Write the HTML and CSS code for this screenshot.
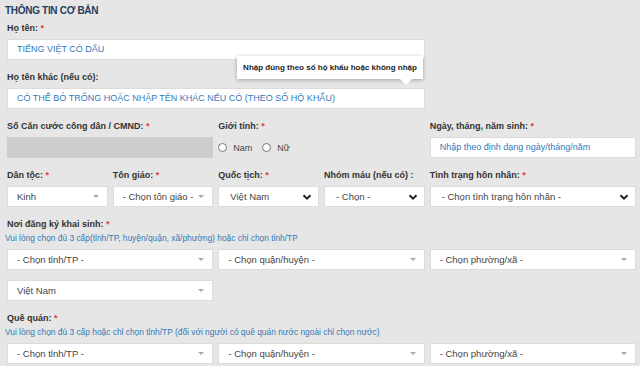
FILE: index.html
```html
<!DOCTYPE html>
<html lang="vi">
<head>
  <meta charset="UTF-8" />
  <meta name="viewport" content="width=device-width, initial-scale=1.0"/>
  <title>Thông tin cơ bản</title>
  <link rel="stylesheet" href="styles.css">
</head>
<body>

  <div class="form">
    <h2 class="title">THÔNG TIN CƠ BẢN</h2>

    <div class="row">
      <div class="field col-8">
        <label>Họ tên: <span class="req">*</span></label>
        <div class="input">TIẾNG VIỆT CÓ DẤU</div>
      </div>
    </div>

    <div class="row">
      <div class="field col-8 has-tip">
        <label>Họ tên khác (nếu có):</label>
        <div class="input">CÓ THỂ BỎ TRỐNG HOẶC NHẬP TÊN KHÁC NẾU CÓ (THEO SỐ HỘ KHẨU)</div>
        <!-- tooltip over the input -->
        <div class="tip">Nhập đúng theo sổ hộ khẩu hoặc không nhập</div>
      </div>
    </div>

    <div class="row">
      <div class="field col-4">
        <label>Số Căn cước công dân / CMND: <span class="req">*</span></label>
        <div class="input disabled"></div>
      </div>
      <div class="field col-4">
        <label>Giới tính: <span class="req">*</span></label>
        <div class="radios">
          <span class="radio"><i></i>Nam</span>
          <span class="radio"><i></i>Nữ</span>
        </div>
      </div>
      <div class="field col-4">
        <label>Ngày, tháng, năm sinh: <span class="req">*</span></label>
        <div class="input">Nhập theo định dạng ngày/tháng/năm</div>
      </div>
    </div>

    <div class="row">
      <div class="field col-2">
        <label>Dân tộc: <span class="req">*</span></label>
        <div class="select s2"><span>Kinh</span><b class="tri"></b></div>
      </div>
      <div class="field col-2">
        <label>Tôn giáo: <span class="req">*</span></label>
        <div class="select s2"><span>- Chọn tôn giáo -</span><b class="tri"></b></div>
      </div>
      <div class="field col-2">
        <label>Quốc tịch: <span class="req">*</span></label>
        <div class="select native"><span>Việt Nam</span><svg viewBox="0 0 10 10"><path d="M1.5 3.2 5 6.7 8.5 3.2"/></svg></div>
      </div>
      <div class="field col-2">
        <label>Nhóm máu (nếu có) :</label>
        <div class="select native"><span>- Chọn -</span><svg viewBox="0 0 10 10"><path d="M1.5 3.2 5 6.7 8.5 3.2"/></svg></div>
      </div>
      <div class="field col-4">
        <label>Tình trạng hôn nhân: <span class="req">*</span></label>
        <div class="select native"><span>- Chọn tình trạng hôn nhân -</span><svg viewBox="0 0 10 10"><path d="M1.5 3.2 5 6.7 8.5 3.2"/></svg></div>
      </div>
    </div>

    <div class="block birth">
      <label>Nơi đăng ký khai sinh: <span class="req">*</span></label>
      <p class="hint">Vui lòng chọn đủ 3 cấp(tỉnh/TP, huyện/quận, xã/phường) hoặc chỉ chọn tỉnh/TP</p>
      <div class="row">
        <div class="col-4"><div class="select s2"><span>- Chọn tỉnh/TP -</span><b class="tri"></b></div></div>
        <div class="col-4"><div class="select s2"><span>- Chọn quận/huyện -</span><b class="tri"></b></div></div>
        <div class="col-4"><div class="select s2"><span>- Chọn phường/xã -</span><b class="tri"></b></div></div>
      </div>
      <div class="row country">
        <div class="col-4"><div class="select s2"><span>Việt Nam</span><b class="tri"></b></div></div>
      </div>
    </div>

    <div class="block home">
      <label>Quê quán: <span class="req">*</span></label>
      <p class="hint">Vui lòng chọn đủ 3 cấp hoặc chỉ chọn tỉnh/TP (đối với người có quê quán nước ngoài chỉ chọn nước)</p>
      <div class="row">
        <div class="col-4"><div class="select s2"><span>- Chọn tỉnh/TP -</span><b class="tri"></b></div></div>
        <div class="col-4"><div class="select s2"><span>- Chọn quận/huyện -</span><b class="tri"></b></div></div>
        <div class="col-4"><div class="select s2"><span>- Chọn phường/xã -</span><b class="tri"></b></div></div>
      </div>
    </div>
  </div>

</body>
</html>
```

FILE: styles.css
```css
body {
  margin: 0;
  background: #e6e6e6;
  font-family: "Liberation Sans", Arial, sans-serif;
  color: #333;
}

.form {
  padding: 4px 4px 0 7px;
}

.title {
  margin: 0 0 3px -2px;
  font-size: 10px;
  letter-spacing: -0.3px;
  line-height: 14px;
  font-weight: bold;
  color: #1f3d5e;
}

.row {
  display: grid;
  grid-template-columns: repeat(12, 1fr);
  column-gap: 5px;
}

.col-2 { grid-column: span 2; }
.col-4 { grid-column: span 4; }
.col-8 { grid-column: span 8; }

.field {
  margin-bottom: 10px;
}

label {
  display: block;
  font-size: 9px;
  line-height: 14px;
  font-weight: bold;
  color: #333;
  margin-bottom: 4px;
}

.req { color: #e0403a; }

.input {
  box-sizing: border-box;
  height: 21px;
  padding: 0 9px;
  background: #fff;
  border: 1px solid #dcdcdc;
  font-size: 9px;
  line-height: 19px;
  color: #337ab7;
  white-space: nowrap;
  overflow: hidden;
}

.input.disabled {
  background: #cdcdcd;
  border-color: #cdcdcd;
}

/* tooltip */
.has-tip {
  position: relative;
}

.tip {
  position: absolute;
  left: 230px;
  top: -14px;
  width: 186px;
  height: 23px;
  box-sizing: border-box;
  background: #fff;
  box-shadow: 0 1px 4px rgba(0,0,0,0.3);
  font-size: 8px;
  font-weight: bold;
  line-height: 23px;
  text-align: center;
  color: #222;
}

.tip::after {
  content: "";
  position: absolute;
  right: 11px;
  bottom: -6px;
  border-left: 6px solid transparent;
  border-right: 6px solid transparent;
  border-top: 6px solid #fff;
}

/* radios */
.radios {
  height: 21px;
  display: flex;
  align-items: center;
  gap: 10px;
  font-size: 9px;
  color: #444;
}

.radio {
  display: flex;
  align-items: center;
}

.radio i {
  display: inline-block;
  width: 7px;
  height: 7px;
  border: 1px solid #777;
  border-radius: 50%;
  background: #fff;
  margin-right: 6px;
}

/* selects */
.select {
  box-sizing: border-box;
  height: 21px;
  display: flex;
  align-items: center;
  justify-content: space-between;
  padding: 0 8px 0 9px;
  background: #fff;
  border: 1px solid #dcdcdc;
  font-size: 9.5px;
  color: #444;
  white-space: nowrap;
}

.select.native {
  padding: 0 6px 0 11px;
}

.tri {
  width: 0;
  height: 0;
  border-left: 3px solid transparent;
  border-right: 3px solid transparent;
  border-top: 3px solid #aaa;
}

.select svg {
  width: 10px;
  height: 10px;
  fill: none;
  stroke: #222;
  stroke-width: 2;
}

/* address blocks */
.block label {
  margin-bottom: 0;
}

.hint {
  margin: 1px 0 5px -2px;
  font-size: 8.4px;
  line-height: 12px;
  color: #337ab7;
}

.country {
  margin-top: 10px;
}

.home {
  margin-top: 10px;
}
```
